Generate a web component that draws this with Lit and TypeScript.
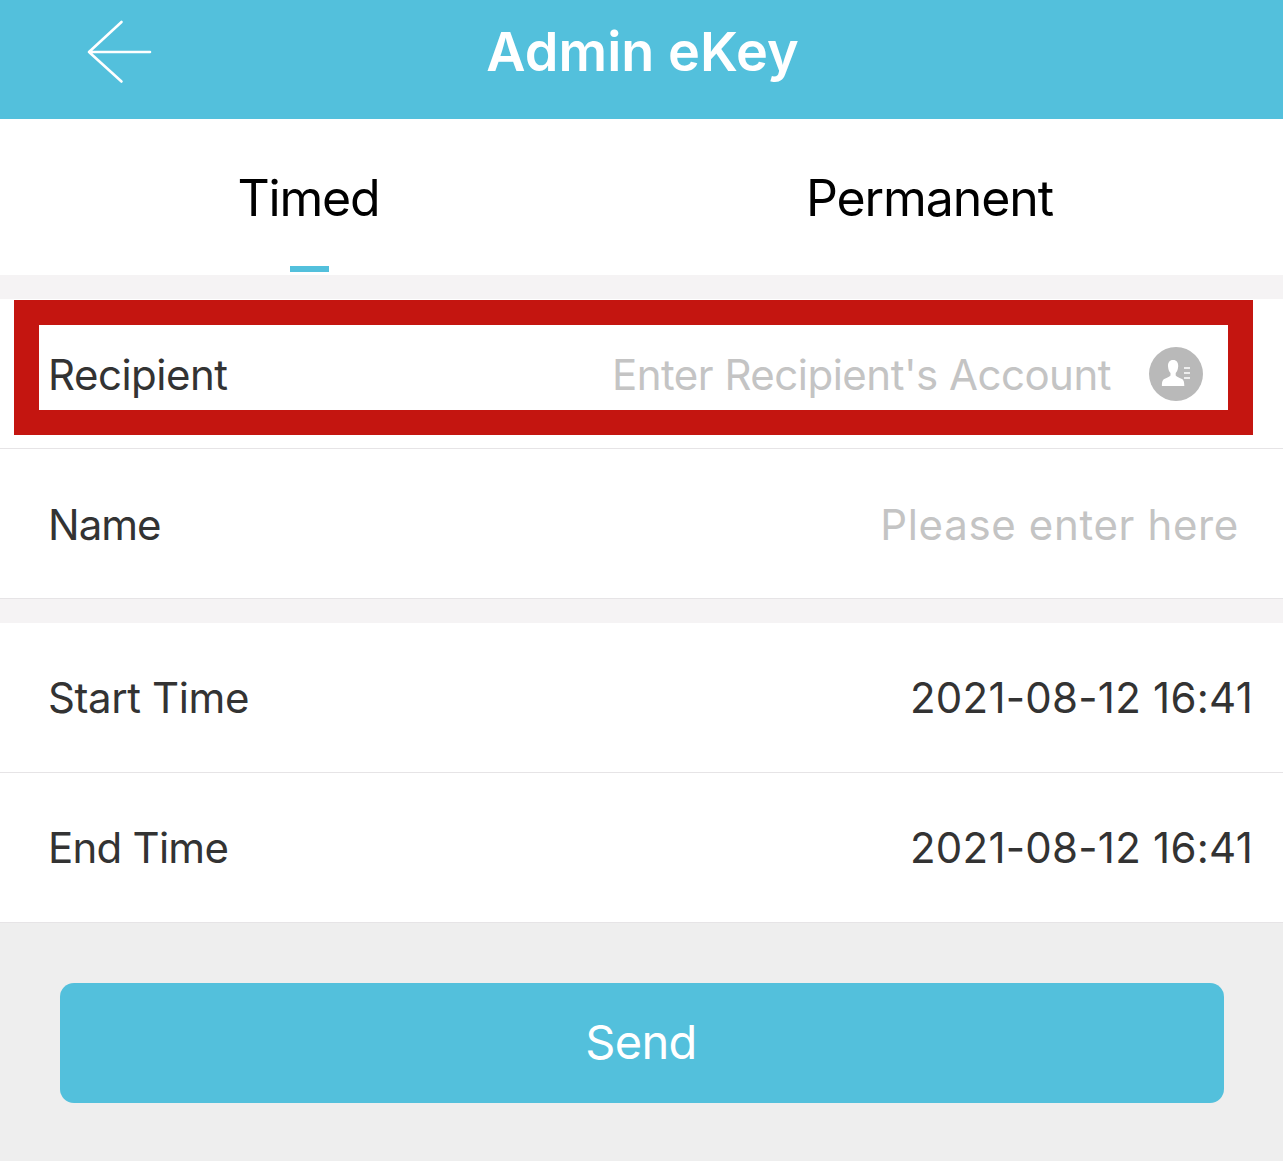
import { LitElement, html, css } from "lit";
import { customElement } from "lit/decorators.js";

@customElement("app-root")
export class AppRoot extends LitElement {
  static styles = css`
    :host { display: block; width: 1283px; height: 1161px; background: #eeeeee; font-family: Inter, "Liberation Sans", sans-serif; position: relative; overflow: hidden; }
    .header { height: 119px; background: #53c0dc; position: relative; display: flex; align-items: center; justify-content: center; padding-bottom: 16px; box-sizing: border-box; }
    .title { color: #fff; font-size: 54px; font-weight: 600; letter-spacing: 0.05px; line-height: 64px; padding-left: 2px; }
    .back { position: absolute; left: 87px; top: 20px; width: 65px; height: 64px; }
    .tabs { height: 156px; background: #fff; display: grid; grid-template-columns: 619px 622px; }
    .tab { position: relative; display: flex; justify-content: center; padding-top: 50px; box-sizing: border-box; font-size: 50px; line-height: 58px; color: #000; letter-spacing: -1.2px; }
    .tab.active { padding-right: 2px; }
    .tab.active::after { content: ""; position: absolute; left: 290px; top: 147px; width: 39px; height: 6px; background: #53c0dc; }
    .tab.perm { letter-spacing: -1.1px; padding-right: 1px; }
    .gap { height: 24px; background: #f5f3f4; }
    .row { height: 150px; box-sizing: border-box; background: #fff; border-bottom: 1px solid #e6e4e6; display: flex; align-items: center; padding: 1px 30px 0 48px; font-size: 42px; color: #333; letter-spacing: -0.5px; }
    .row.time { padding-top: 0; }
    .label { flex: 1; }
    .label.tight { letter-spacing: -0.75px; }
    .label.name { letter-spacing: -1px; }
    .label.loose { letter-spacing: -0.4px; }
    .ph { color: #c4c4c4; }
    .ph.name { margin-right: 14px; letter-spacing: 0.65px; }
    .avatar { width: 54px; height: 54px; margin: -1px 50px 0 38px; flex: none; display: block; }
    .value { color: #333; letter-spacing: 0.25px; }
    .actions { padding: 60px 59px 60px 60px; }
    .send { height: 120px; padding: 0 2px 3px 0; box-sizing: border-box; background: #53c0dc; border-radius: 14px; display: flex; align-items: center; justify-content: center; color: #fff; font-size: 47px; letter-spacing: -0.7px; }
    .highlight { position: absolute; left: 14px; top: 300px; width: 1239px; height: 135px; border: 25px solid #c41510; box-sizing: border-box; }
  `;

  render() {
    return html`
      <div class="header">
        <svg class="back" viewBox="0 0 65 64" fill="none" stroke="#fff" stroke-width="2.6" stroke-linecap="round" stroke-linejoin="round">
          <path d="M34.5 2 L2 32 L34.5 61.500 M2 32 H63"/>
        </svg>
        <span class="title">Admin eKey</span>
      </div>
      <div class="tabs">
        <div class="tab active">Timed</div>
        <div class="tab perm">Permanent</div>
      </div>
      <div class="gap"></div>
      <div class="row">
        <span class="label">Recipient</span>
        <span class="ph">Enter Recipient's Account</span>
        <svg class="avatar" viewBox="0 0 54 54">
          <circle cx="27" cy="27" r="27" fill="#b9b9b9"/>
          <path fill="#fff" d="M24 13c-3.400 0-5.200 2.600-5 6.200.2 3 1 5.300 2.500 6.800v2.600c-1.300 1.500-3.500 2.400-5.600 3.200-2.200.8-3 2.500-3 7.200h22.400c0-4.700-.8-6.400-3-7.200-2.100-.8-4.300-1.700-5.600-3.200V26c1.500-1.500 2.300-3.800 2.500-6.800.2-3.600-1.600-6.200-5-6.200z"/>
          <path fill="#fff" d="M35 20.300h6v1.500h-6zM35 25.300h6v1.500h-6zM35 30.300h6v1.500h-6z"/>
        </svg>
      </div>
      <div class="row">
        <span class="label name">Name</span>
        <span class="ph name">Please enter here</span>
      </div>
      <div class="gap"></div>
      <div class="row time">
        <span class="label loose">Start Time</span>
        <span class="value">2021-08-12 16:41</span>
      </div>
      <div class="row time">
        <span class="label tight">End Time</span>
        <span class="value">2021-08-12 16:41</span>
      </div>
      <div class="actions"><div class="send">Send</div></div>
      <div class="highlight"></div>
    `;
  }
}
